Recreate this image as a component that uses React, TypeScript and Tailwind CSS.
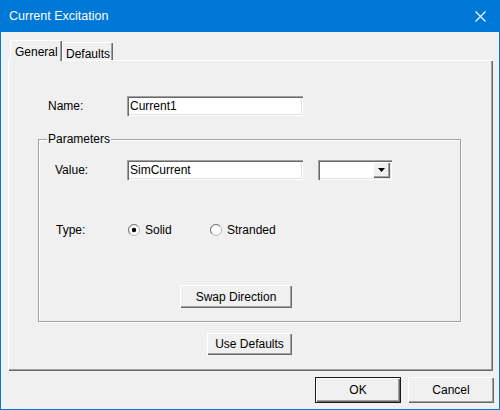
import React from 'react';

const raised =
  'bg-[#f0f0f0] shadow-[inset_1px_1px_0_#ffffff,inset_-1px_-1px_0_#696969,inset_-2px_-2px_0_#a0a0a0]';
const sunken =
  'bg-white shadow-[inset_1px_1px_0_#a0a0a0,inset_2px_2px_0_#696969,inset_-1px_-1px_0_#ffffff,inset_-2px_-2px_0_#e3e3e3]';

const Radio: React.FC<{ checked?: boolean; label: string }> = ({ checked, label }) => (
  <div className="flex items-center gap-[5px]">
    <svg width="12" height="12" viewBox="0 0 12 12">
      <circle cx="6" cy="6" r="5.5" fill="#ffffff" stroke="#b5b5b5" />
      <path d="M2.1 9.9 A5.5 5.5 0 0 1 9.9 2.1" fill="none" stroke="#7a7a7a" />
      {checked && <circle cx="6" cy="6" r="2.2" fill="#000000" />}
    </svg>
    <span>{label}</span>
  </div>
);

const Button: React.FC<{ label: string; className?: string }> = ({ label, className }) => (
  <button className={`${raised} flex items-center justify-center text-black ${className ?? ''}`}>
    {label}
  </button>
);

export default function App() {
  return (
    <div
      className="w-[500px] h-[410px] bg-[#0078d7] px-[1px] pb-[1px] flex flex-col text-[12px] text-black"
      style={{ fontFamily: '"Liberation Sans", Arial, sans-serif' }}
    >
      {/* Title bar */}
      <div className="h-[32px] flex items-center justify-between pl-[8px] pr-[13px] text-white">
        <span className="text-[12.5px]">Current Excitation</span>
        <svg width="11" height="11" viewBox="0 0 11 11">
          <path d="M0.5 0.5 L10.5 10.5 M10.5 0.5 L0.5 10.5" stroke="#ffffff" strokeWidth="1.1" />
        </svg>
      </div>

      {/* Body */}
      <div className="flex-1 bg-[#f0f0f0] flex flex-col pt-[8px]">
        {/* Tabs */}
        <div className="flex items-end h-[20px] pl-[9px]">
          <div className="relative z-10 w-[52px] h-[21px] -mb-[1px] pl-[5px] pt-[3px] bg-[#f0f0f0] shadow-[inset_1px_1px_0_#ffffff,inset_-1px_0_0_#696969,inset_-2px_0_0_#a0a0a0]">
            General
          </div>
          <div className="w-[51px] h-[18px] pl-[4px] pt-[3px] shadow-[inset_1px_1px_0_#ffffff,inset_-1px_0_0_#696969,inset_-2px_0_0_#a0a0a0]">
            Defaults
          </div>
        </div>

        {/* Tab panel */}
        <div className="ml-[7px] w-[485px] h-[311px] shadow-[inset_1px_1px_0_#ffffff,inset_-1px_-1px_0_#696969,inset_-2px_-2px_0_#a0a0a0] pt-[36px] flex flex-col">
          <div className="flex items-center pl-[40px]">
            <span className="w-[79px]">Name:</span>
            <div className={`${sunken} w-[176px] h-[20px] flex items-center pl-[3px]`}>Current1</div>
          </div>

          {/* Parameters group */}
          <div className="relative mt-[23px] ml-[30px] w-[423px] h-[183px] border border-[#a0a0a0] shadow-[inset_1px_1px_0_#ffffff,1px_1px_0_#ffffff] pt-[20px] flex flex-col">
            <span className="absolute -top-[8px] left-[8px] px-[1px] bg-[#f0f0f0] leading-[14px]">Parameters</span>

            <div className="flex items-center pl-[16px]">
              <span className="w-[72px]">Value:</span>
              <div className={`${sunken} w-[176px] h-[20px] flex items-center pl-[3px]`}>SimCurrent</div>
              <div className={`${sunken} ml-[15px] w-[74px] h-[20px] flex justify-end p-[2px]`}>
                <div className={`${raised} w-[17px] h-[16px] flex items-center justify-center`}>
                  <svg width="7" height="4" viewBox="0 0 7 4">
                    <path d="M0 0 H7 L3.5 4 Z" fill="#000000" />
                  </svg>
                </div>
              </div>
            </div>

            <div className="flex items-center h-[20px] mt-[40px] pl-[17px]">
              <span className="w-[72px]">Type:</span>
              <div className="w-[82px]">
                <Radio checked label="Solid" />
              </div>
              <Radio label="Stranded" />
            </div>

            <Button label="Swap Direction" className="mt-[45px] ml-[141px] w-[112px] h-[23px]" />
          </div>

          <Button label="Use Defaults" className="mt-[11px] ml-[199px] w-[85px] h-[22px]" />
        </div>

        {/* Dialog buttons */}
        <div className="flex justify-end gap-[7px] mt-[6px] pr-[5px]">
          <button className="w-[86px] h-[26px] border border-[#1a1a1a] bg-[#f0f0f0] shadow-[inset_1px_1px_0_#ffffff,inset_-1px_-1px_0_#696969,inset_-2px_-2px_0_#a0a0a0] flex items-center justify-center">
            OK
          </button>
          <Button label="Cancel" className="w-[86px] h-[26px]" />
        </div>
      </div>
    </div>
  );
}
